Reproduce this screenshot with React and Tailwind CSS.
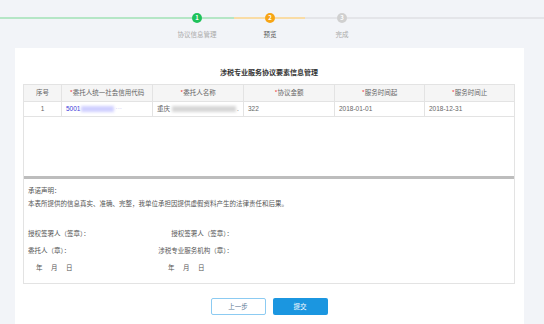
const cols = [
  { label: "序号", req: false },
  { label: "委托人统一社会信用代码", req: true },
  { label: "委托人名称", req: true },
  { label: "协议金额", req: true },
  { label: "服务时间起", req: true },
  { label: "服务时间止", req: true },
];

const Step = ({ n, label, color, labelColor, left, right }) => (
  <div className="w-[40px] shrink-0 flex flex-col items-center">
    <div className="mt-[13px] w-full flex items-center">
      <div className={`h-[2px] flex-1 ${left}`} />
      <div
        className={`w-[10px] h-[10px] rounded-full flex items-center justify-center text-white text-[6px] font-bold leading-none ${color}`}
      >
        {n}
      </div>
      <div className={`h-[2px] flex-1 ${right}`} />
    </div>
    <div className={`mt-[8px] whitespace-nowrap text-[6.5px] leading-none ${labelColor}`}>{label}</div>
  </div>
);

const Line = ({ w, color }) => <div className={`h-[2px] mt-[17px] ${w} ${color}`} />;

export default function App() {
  return (
    <div
      className="w-[544px] h-[324px] overflow-hidden bg-[#f2f4f8] text-[#666]"
      style={{ fontFamily: '"Noto Sans CJK SC", "Liberation Sans", sans-serif' }}
    >
      {/* steps */}
      <div className="h-[48px] flex items-start">
        <Line w="w-[177px]" color="bg-[#b5e6c6]" />
        <Step
          n="1"
          label="协议信息管理"
          color="bg-[#1fc25b]"
          labelColor="text-[#aaa]"
          left="bg-[#b5e6c6]"
          right="bg-[#b5e6c6]"
        />
        <Line w="w-[17px]" color="bg-[#b5e6c6]" />
        <Line w="w-[16px]" color="bg-[#f9dca6]" />
        <Step
          n="2"
          label="预览"
          color="bg-[#f7a515]"
          labelColor="text-[#555]"
          left="bg-[#f9dca6]"
          right="bg-[#f9dca6]"
        />
        <Line w="w-[15px]" color="bg-[#f9dca6]" />
        <Line w="w-[17px]" color="bg-[#e4e5e9]" />
        <Step
          n="3"
          label="完成"
          color="bg-[#d0d0d0]"
          labelColor="text-[#aaa]"
          left="bg-[#e4e5e9]"
          right="bg-[#e4e5e9]"
        />
        <Line w="flex-1" color="bg-[#e4e5e9]" />
      </div>

      {/* panel */}
      <div className="ml-[15px] mr-[20px] h-[276px] bg-white pl-[8px] pr-[9px] pt-[19px]">
        <div className="h-[10px] text-center text-[7px] leading-[10px] font-bold text-[#333]">
          涉税专业服务协议要素信息管理
        </div>
        <div className="mt-[7px] border border-[#e3e3e3]">
          <div className="grid grid-cols-[38px_91px_91px_91px_90px_1fr] bg-[#f5f5f5] border-b border-[#e3e3e3] h-[17px] text-[6.5px]">
            {cols.map((c, i) => (
              <div
                key={c.label}
                className={`flex items-center justify-center ${i < 5 ? "border-r border-[#e3e3e3]" : ""}`}
              >
                {c.req && <span className="text-[#f04040]">*</span>}
                {c.label}
              </div>
            ))}
          </div>
          <div
            className="grid grid-cols-[38px_91px_91px_91px_90px_1fr] border-b border-[#e3e3e3] h-[15px] text-[6.5px]"
            style={{ fontFamily: '"Liberation Sans", "Noto Sans CJK SC", sans-serif' }}
          >
            <div className="flex items-center justify-center border-r border-[#e3e3e3]">1</div>
            <div className="flex items-center pl-[4px] border-r border-[#e3e3e3] text-[#3b3bd9]">
              5001
              <span className="ml-[1px] w-[33px] h-[6px] bg-[#cfcfff] blur-[1.5px]" />
              <span className="ml-[1px] text-[#c8c8f0]">···</span>
            </div>
            <div className="flex items-center pl-[4px] border-r border-[#e3e3e3]">
              <span style={{ fontFamily: '"Noto Sans CJK SC", sans-serif' }}>重庆</span>
              <span className="ml-[2px] w-[64px] h-[6px] bg-[#d6d6d6] blur-[1.5px]" />
              <span className="ml-[1px]">.</span>
            </div>
            <div className="flex items-center pl-[4px] border-r border-[#e3e3e3]">322</div>
            <div className="flex items-center pl-[4px] border-r border-[#e3e3e3]">2018-01-01</div>
            <div className="flex items-center pl-[4px]">2018-12-31</div>
          </div>
          <div className="h-[59px]" />
          <div className="h-[3px] bg-[#bdbdbd]" />
          <div className="h-[104px] pl-[4px] pt-[6px] text-[6.5px] leading-[10px] text-[#555]">
            <div>承诺声明：</div>
            <div className="mt-[3px]">
              本表所提供的信息真实、准确、完整，我单位承担因提供虚假资料产生的法律责任和后果。
            </div>
            <div className="mt-[20px] grid grid-cols-[129px_76px] gap-y-[7px]">
              <div>授权签署人（签章）：</div>
              <div className="text-right">授权签署人（签章）：</div>
              <div>委托人（章）：</div>
              <div className="text-right whitespace-nowrap">涉税专业服务机构（章）：</div>
              <div className="pl-[8px] flex gap-[8.5px]">
                <span>年</span>
                <span>月</span>
                <span>日</span>
              </div>
              <div className="pl-[11px] flex gap-[8.5px]">
                <span>年</span>
                <span>月</span>
                <span>日</span>
              </div>
            </div>
          </div>
        </div>
        <div className="mt-[14px] flex justify-center gap-[7px]">
          <button className="w-[55px] h-[17px] border border-[#8ccbf2] rounded-[2px] bg-white text-[6.5px] text-[#5a7a95] flex items-center justify-center">
            上一步
          </button>
          <button className="w-[55px] h-[17px] rounded-[2px] bg-[#1b96e0] text-[6.5px] text-white flex items-center justify-center">
            提交
          </button>
        </div>
      </div>
    </div>
  );
}
